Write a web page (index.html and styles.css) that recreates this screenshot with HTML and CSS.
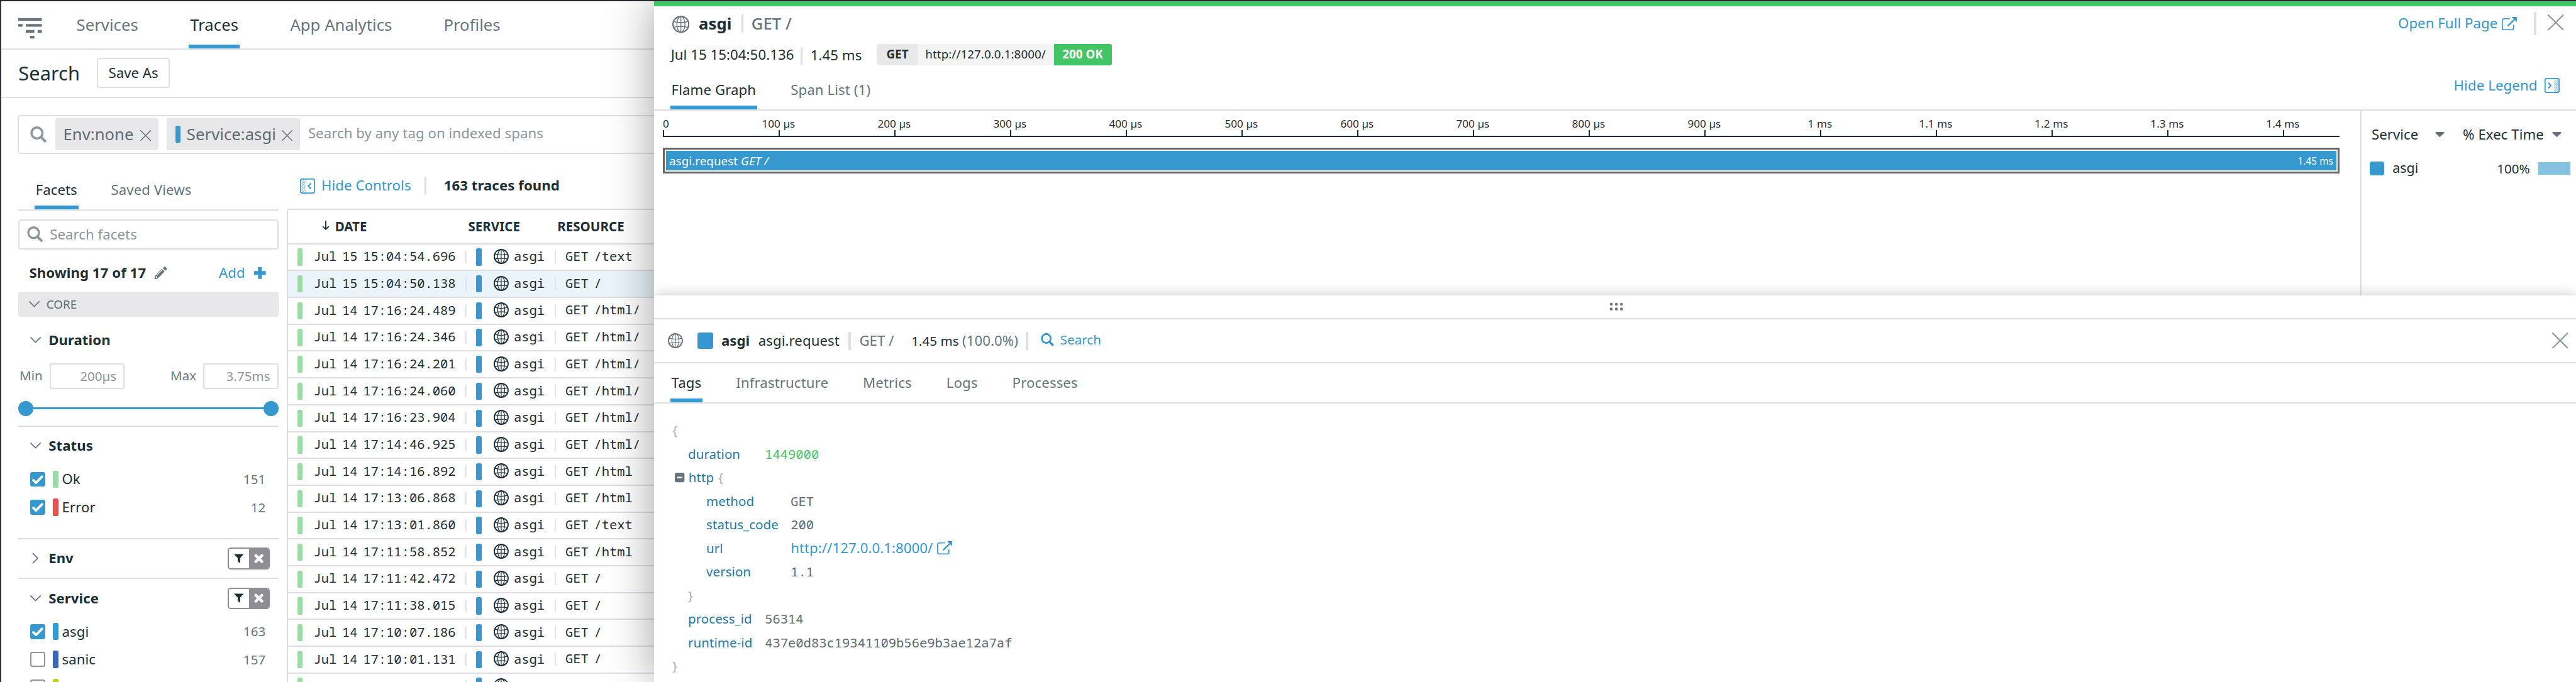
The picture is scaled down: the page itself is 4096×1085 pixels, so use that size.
FILE: index.html
```html
<!DOCTYPE html>
<html lang="en">
<head>
<meta charset="utf-8">
<title>Traces</title>
<link rel="stylesheet" href="styles.css">
</head>
<body>
<svg class="defs" aria-hidden="true">
  <defs>
    <symbol id="globe" viewBox="0 0 28 28"><g fill="none" stroke="currentColor" stroke-width="1.4"><circle cx="14" cy="14" r="12.9" stroke-width="2.2"/><ellipse cx="14" cy="14" rx="6.6" ry="12.8"/><path d="M14 1v26M2.200 9.600c7 1.800 16.600 1.800 23.600 0M2.200 18.900c7-1.800 16.600-1.800 23.600 0"/></g></symbol>
    <symbol id="search" viewBox="0 0 28 28"><g fill="none" stroke="currentColor"><circle cx="11.8" cy="11.6" r="9.6" stroke-width="3.8"/><path d="M19 19l7 7" stroke-width="4.6" stroke-linecap="round"/></g></symbol>
    <symbol id="close" viewBox="0 0 30 30"><path d="M1.2 1.2l27.6 27.6M28.8 1.2L1.2 28.8" fill="none" stroke="currentColor" stroke-width="2.4" stroke-linecap="round"/></symbol>
    <symbol id="down" viewBox="0 0 20 12"><path d="M1 1l9 9 9-9" fill="none" stroke="currentColor" stroke-width="2" stroke-linecap="round"/></symbol>
    <symbol id="check" viewBox="0 0 28 28"><path d="M5.8 15.2l5 4.8L22 8.6" fill="none" stroke="#fff" stroke-width="4.4" stroke-linecap="round" stroke-linejoin="round"/></symbol>
    <symbol id="external" viewBox="0 0 28 25"><g fill="none" stroke="currentColor"><path d="M15 3.2H4.6Q1 3.2 1 6.8v13.4q0 3.6 3.6 3.6h13.8q3.6 0 3.6-3.6V15" stroke-width="2"/><path d="M12 16L25 3.5" stroke-width="2.8" stroke-linecap="round"/></g><path d="M18.5 0H28v9.5z" fill="currentColor"/></symbol>
    <symbol id="collapse" viewBox="0 0 28 28"><g fill="none" stroke="currentColor"><rect x="1" y="1" width="26" height="26" rx="3" stroke-width="2"/><path d="M3 7l4-4M3 11l7-7M3 15l7-7M3 19l7-7M3 23l7-7M4 26l6-6M8 26l2-2" stroke-width="1"/><path d="M20.4 8.8l-5 5.2 5 5.2" stroke-width="2.4"/></g></symbol>
    <symbol id="expand" viewBox="0 0 28 28"><g fill="none" stroke="currentColor"><rect x="1" y="1" width="26" height="26" rx="3" stroke-width="2"/><path d="M18 7l4-4M18 11l7-7M18 15l7-7M18 19l7-7M18 23l7-7M19 26l6-6M23 26l2-2" stroke-width="1"/><path d="M7 9l5 5-5 5" stroke-width="2.4"/></g></symbol>
    <symbol id="filter" viewBox="0 0 18 18"><path d="M0 .5h18l-6.500 7.500V17.500L7 14V8z" fill="currentColor"/></symbol>
    <symbol id="cross" viewBox="0 0 16 16"><path d="M3 3l10 10M13 3L3 13" fill="none" stroke="#fff" stroke-width="4.600" stroke-linecap="round"/></symbol>
  </defs>
</svg>

<main class="app">
  <nav class="nav">
    <svg class="logo" viewBox="0 0 44 39"><path d="M0 1h44v5H0zM0 12h8v5H0zM14 12h30v5H14zM14 23h16v5H14zM36 23h8v5h-8zM22 34h8v5h-8z" fill="#68747b"/></svg>
    <a class="nav-tab">Services</a>
    <a class="nav-tab active">Traces</a>
    <a class="nav-tab">App Analytics</a>
    <a class="nav-tab">Profiles</a>
  </nav>
  <header class="titlebar"><h1>Search</h1><button class="save">Save As</button></header>

  <div class="searchbar">
    <svg class="ic-search"><use href="#search"/></svg>
    <span class="chip env">Env:none<svg class="ic-x"><use href="#close"/></svg></span>
    <span class="chip service"><i class="bar blue"></i>Service:asgi<svg class="ic-x"><use href="#close"/></svg></span>
    <span class="placeholder">Search by any tag on indexed spans</span>
  </div>

  <div class="columns">
    <aside class="sidebar">
      <div class="side-tabs"><a class="active">Facets</a><a>Saved Views</a></div>
      <div class="facet-search"><svg class="ic-search"><use href="#search"/></svg>Search facets</div>
      <div class="showing">
        <b>Showing 17 of 17</b>
        <svg class="pencil" viewBox="0 0 24 24"><path d="M1.500 17.500L14.500 4.500l5 5-13 13-5.800 1.300z" fill="#68747b"/><path d="M16 3l2.500-2.500q1.200-.8 2.300.2l2.500 2.500q1 1.200.1 2.300L21 8z" fill="#68747b"/><path d="M5.500 16l9-9" stroke="#fff" stroke-width="1.200"/><path d="M3.500 18.800l2 2" stroke="#fff" stroke-width="2.400"/></svg>
        <a class="add">Add<svg viewBox="0 0 24 24"><path d="M12 1v22M1 12h22" stroke="currentColor" stroke-width="7"/></svg></a>
      </div>
      <div class="core"><svg><use href="#down"/></svg>CORE</div>

      <section class="facet">
        <h3 class="tall"><svg class="chev"><use href="#down"/></svg>Duration</h3>
        <div class="range"><label>Min</label><span class="num">200µs</span><label class="max">Max</label><span class="num">3.75ms</span></div>
        <div class="slider"><i></i><i></i></div>
      </section>
      <section class="facet status">
        <h3><svg class="chev"><use href="#down"/></svg>Status</h3>
        <div class="opt"><span class="box on"><svg><use href="#check"/></svg></span><i class="bar green"></i>Ok<em>151</em></div>
        <div class="opt"><span class="box on"><svg><use href="#check"/></svg></span><i class="bar red"></i>Error<em>12</em></div>
      </section>
      <section class="facet">
        <h3><svg class="chev closed"><use href="#down"/></svg>Env<span class="toggle"><span><svg><use href="#filter"/></svg></span><span class="off"><svg><use href="#cross"/></svg></span></span></h3>
      </section>
      <section class="facet">
        <h3><svg class="chev"><use href="#down"/></svg>Service<span class="toggle"><span><svg><use href="#filter"/></svg></span><span class="off"><svg><use href="#cross"/></svg></span></span></h3>
        <div class="opt"><span class="box on"><svg><use href="#check"/></svg></span><i class="bar blue"></i>asgi<em>163</em></div>
        <div class="opt"><span class="box"></span><i class="bar navy"></i>sanic<em>157</em></div>
        <div class="opt"><span class="box"></span><i class="bar lime"></i></div>
      </section>
    </aside>

    <section class="results">
      <div class="toolbar"><svg class="ic-panel"><use href="#collapse"/></svg><a>Hide Controls</a><i class="sep"></i><b>163 traces found</b></div>
      <div class="table">
        <div class="thead"><svg viewBox="0 0 12 18"><path d="M6 1v15M1 11.300l5 5 5-5" fill="none" stroke="currentColor" stroke-width="2.200" stroke-linecap="round" stroke-linejoin="round"/></svg><span class="th-date">DATE</span><span class="th-service">SERVICE</span><span>RESOURCE</span></div>
        <div class="tr"><i class="bar green"></i><span class="date">Jul 15 15:04:54.696</span><i class="bar blue"></i><svg><use href="#globe"/></svg><span class="svc">asgi</span><span class="res">GET /text</span></div>
        <div class="tr selected"><i class="bar green"></i><span class="date">Jul 15 15:04:50.138</span><i class="bar blue"></i><svg><use href="#globe"/></svg><span class="svc">asgi</span><span class="res">GET /</span></div>
        <div class="tr"><i class="bar green"></i><span class="date">Jul 14 17:16:24.489</span><i class="bar blue"></i><svg><use href="#globe"/></svg><span class="svc">asgi</span><span class="res">GET /html/</span></div>
        <div class="tr"><i class="bar green"></i><span class="date">Jul 14 17:16:24.346</span><i class="bar blue"></i><svg><use href="#globe"/></svg><span class="svc">asgi</span><span class="res">GET /html/</span></div>
        <div class="tr"><i class="bar green"></i><span class="date">Jul 14 17:16:24.201</span><i class="bar blue"></i><svg><use href="#globe"/></svg><span class="svc">asgi</span><span class="res">GET /html/</span></div>
        <div class="tr"><i class="bar green"></i><span class="date">Jul 14 17:16:24.060</span><i class="bar blue"></i><svg><use href="#globe"/></svg><span class="svc">asgi</span><span class="res">GET /html/</span></div>
        <div class="tr"><i class="bar green"></i><span class="date">Jul 14 17:16:23.904</span><i class="bar blue"></i><svg><use href="#globe"/></svg><span class="svc">asgi</span><span class="res">GET /html/</span></div>
        <div class="tr"><i class="bar green"></i><span class="date">Jul 14 17:14:46.925</span><i class="bar blue"></i><svg><use href="#globe"/></svg><span class="svc">asgi</span><span class="res">GET /html/</span></div>
        <div class="tr"><i class="bar green"></i><span class="date">Jul 14 17:14:16.892</span><i class="bar blue"></i><svg><use href="#globe"/></svg><span class="svc">asgi</span><span class="res">GET /html</span></div>
        <div class="tr"><i class="bar green"></i><span class="date">Jul 14 17:13:06.868</span><i class="bar blue"></i><svg><use href="#globe"/></svg><span class="svc">asgi</span><span class="res">GET /html</span></div>
        <div class="tr"><i class="bar green"></i><span class="date">Jul 14 17:13:01.860</span><i class="bar blue"></i><svg><use href="#globe"/></svg><span class="svc">asgi</span><span class="res">GET /text</span></div>
        <div class="tr"><i class="bar green"></i><span class="date">Jul 14 17:11:58.852</span><i class="bar blue"></i><svg><use href="#globe"/></svg><span class="svc">asgi</span><span class="res">GET /html</span></div>
        <div class="tr"><i class="bar green"></i><span class="date">Jul 14 17:11:42.472</span><i class="bar blue"></i><svg><use href="#globe"/></svg><span class="svc">asgi</span><span class="res">GET /</span></div>
        <div class="tr"><i class="bar green"></i><span class="date">Jul 14 17:11:38.015</span><i class="bar blue"></i><svg><use href="#globe"/></svg><span class="svc">asgi</span><span class="res">GET /</span></div>
        <div class="tr"><i class="bar green"></i><span class="date">Jul 14 17:10:07.186</span><i class="bar blue"></i><svg><use href="#globe"/></svg><span class="svc">asgi</span><span class="res">GET /</span></div>
        <div class="tr"><i class="bar green"></i><span class="date">Jul 14 17:10:01.131</span><i class="bar blue"></i><svg><use href="#globe"/></svg><span class="svc">asgi</span><span class="res">GET /</span></div>
        <div class="tr"><i class="bar green"></i><span class="date"></span><i class="bar blue"></i><svg><use href="#globe"/></svg></div>
      </div>
    </section>
  </div>
</main>

<div class="drawer">
  <header class="trace-head">
    <div class="trace-title">
      <svg class="globe"><use href="#globe"/></svg><b>asgi</b><i class="sep"></i><span class="muted">GET /</span>
      <a class="open">Open Full Page<svg><use href="#external"/></svg></a><i class="sep"></i><svg class="ic-close"><use href="#close"/></svg>
    </div>
    <div class="trace-info">
      <span class="when">Jul 15 15:04:50.136</span><i class="sep"></i><span class="took">1.45 ms</span>
      <span class="pill"><b class="verb">GET</b><span class="url">http://127.0.0.1:8000/</span><b class="code">200 OK</b></span>
    </div>
    <div class="tabs graph-tabs"><a class="active">Flame Graph</a><a>Span List (1)</a><span class="legend-link">Hide Legend<svg class="ic-panel"><use href="#expand"/></svg></span></div>
  </header>

  <div class="graph">
    <div class="flame">
      <div class="axis">
        <div class="tick first"><span>0</span></div><div class="tick"><span>100 µs</span></div><div class="tick"><span>200 µs</span></div><div class="tick"><span>300 µs</span></div><div class="tick"><span>400 µs</span></div><div class="tick"><span>500 µs</span></div><div class="tick"><span>600 µs</span></div><div class="tick"><span>700 µs</span></div><div class="tick"><span>800 µs</span></div><div class="tick"><span>900 µs</span></div><div class="tick"><span>1 ms</span></div><div class="tick"><span>1.1 ms</span></div><div class="tick"><span>1.2 ms</span></div><div class="tick"><span>1.3 ms</span></div><div class="tick last"><span>1.4 ms</span></div>
      </div>
      <div class="span-frame"><div class="span"><span>asgi.request <i>GET /</i></span><small>1.45 ms</small></div></div>
    </div>
    <div class="legend">
      <div class="legend-head"><span class="lh-service">Service</span><i class="caret"></i><span class="lh-exec">% Exec Time</span><i class="caret"></i></div>
      <div class="legend-row"><i class="swatch"></i><span class="lr-name">asgi</span><span class="lr-pct">100%</span><i class="meter"></i></div>
    </div>
  </div>

  <section class="detail">
    <div class="handle"><svg viewBox="0 0 26 16"><g fill="#68747b"><circle cx="3.500" cy="3.500" r="2.700"/><circle cx="13" cy="3.500" r="2.700"/><circle cx="22.500" cy="3.500" r="2.700"/><circle cx="3.500" cy="12.500" r="2.700"/><circle cx="13" cy="12.500" r="2.700"/><circle cx="22.500" cy="12.500" r="2.700"/></g></svg></div>
    <div class="span-head">
      <svg class="globe"><use href="#globe"/></svg><i class="swatch"></i><b>asgi</b><span class="op">asgi.request</span><i class="sep"></i><span class="muted resource">GET /</span><span class="time">1.45 ms <span class="muted">(100.0%)</span></span><i class="sep"></i>
      <a class="find"><svg><use href="#search"/></svg>Search</a><svg class="ic-close"><use href="#close"/></svg>
    </div>
    <div class="tabs span-tabs"><a class="active">Tags</a><a>Infrastructure</a><a>Metrics</a><a>Logs</a><a>Processes</a></div>
    <div class="tree">
      <div class="line"><span class="brace">{</span></div>
      <div class="line l1"><span class="key">duration</span><span class="val num-val">1449000</span></div>
      <div class="line group"><svg viewBox="0 0 18 18"><rect width="18" height="18" rx="3.500" fill="#68747b"/><path d="M4 9h10" stroke="#fff" stroke-width="2.600"/></svg><span class="key">http</span><span class="brace">{</span></div>
      <div class="line l2"><span class="key">method</span><span class="val">GET</span></div>
      <div class="line l2"><span class="key">status_code</span><span class="val">200</span></div>
      <div class="line l2"><span class="key">url</span><a class="link">http://127.0.0.1:8000/<svg><use href="#external"/></svg></a></div>
      <div class="line l2"><span class="key">version</span><span class="val">1.1</span></div>
      <div class="line l1"><span class="brace">}</span></div>
      <div class="line l1"><span class="key">process_id</span><span class="val">56314</span></div>
      <div class="line l1"><span class="key">runtime-id</span><span class="val">437e0d83c19341109b56e9b3ae12a7af</span></div>
      <div class="line"><span class="brace">}</span></div>
    </div>
  </section>
</div>
</body>
</html>
```
FILE: styles.css
```css
/* 1rem = 10 design units */
html { font-size: 8.5405px; }
*, *::before, *::after { box-sizing: border-box; }
body {
  position: relative; margin: 0; width: 100vw; height: 100vh; overflow: hidden;
  background: #fff; border-top: 2px solid #29262b; color: #1e2e35;
  font-family: "Noto Sans", "Open Sans", sans-serif; font-size: 2.6rem; line-height: 1; letter-spacing: .003em;
  --line: #dedee3; --blue: #3598ce; --gray: #68747b; --soft: #8d969b;
}
svg { display: block; flex: none; overflow: visible; }
span, a, b, h1, em, label, button { white-space: nowrap; }
.defs { position: absolute; width: 0; height: 0; }
h1, h3 { margin: 0; }
em { font-style: normal; }
a { color: var(--blue); }
.muted { color: var(--gray); }
.bar { flex: none; width: 1rem; height: 3.2rem; border-radius: .3rem; }
.blue { background: var(--blue); }
.green { background: #98dda1; }
.red { background: #e2554f; }
.navy { background: #3b66b5; }
.lime { background: #bfd01d; }
.sep { flex: none; width: .4rem; height: 3.4rem; background: var(--line); }
.ic-panel { width: 2.8rem; height: 2.8rem; color: var(--blue); }
.ic-close { width: 3rem; height: 3rem; color: #8a9499; }
.globe { color: var(--gray); }

/* page behind the drawer */
.app { height: 100%; border-left: 2px solid #352e3f; display: flex; flex-direction: column; }
.nav { flex: none; height: 9rem; display: flex; align-items: stretch; gap: 9.200rem; padding-left: 3.2rem; border-bottom: 2px solid var(--line); font-size: 3rem; }
.logo { width: 4.4rem; height: 3.9rem; margin: 3rem -3rem 0 0; }
.nav-tab { display: flex; align-items: center; padding: 0 .2rem; color: var(--gray); border-bottom: .8rem solid transparent; border-top: .8rem solid transparent; }
.nav-tab.active { padding: 0 .250rem; }
.active { color: #1e2e35 !important; border-bottom-color: var(--blue) !important; }
.titlebar { flex: none; height: 9rem; display: flex; align-items: center; padding-left: 3.2rem; border-bottom: 2px solid var(--line); }
h1 { width: 14.6rem; font-size: 3.6rem; font-weight: 400; }
.save { width: 13.6rem; height: 5.6rem; padding: 0; border: 2px solid var(--line); border-radius: .5rem; background: #fff; color: inherit; font: inherit; line-height: 1; }
.searchbar { flex: none; margin: 3.2rem 0 0 3rem; height: 7.2rem; display: flex; align-items: center; border: 2px solid var(--line); border-radius: .6rem; }
.ic-search { color: var(--soft); width: 2.9rem; height: 2.9rem; }
.searchbar .ic-search { width: 3rem; height: 3rem; margin-left: 2.2rem; }
.chip { display: flex; align-items: center; height: 6rem; border-radius: .4rem; background: #e8e8ea; color: #5f6a71; font-size: 3rem; }
.env { width: 19.2rem; margin-left: 1.6rem; padding-left: 1.5rem; }
.service { width: 24.8rem; margin-left: 1.6rem; padding-left: 1.6rem; }
.service .bar { margin-right: 1.1rem; }
.ic-x { width: 2rem; height: 2rem; margin: .4rem 1.4rem 0 auto; }
.placeholder { margin: -.4rem 0 0 1.5rem; color: var(--soft); }
.columns { display: flex; }

/* facets */
.sidebar { flex: none; width: 48.4rem; margin-left: 3.2rem; padding-top: 2.8rem; }
.side-tabs { display: flex; gap: 5.9rem; height: 7.8rem; padding-left: 3rem; border-bottom: 2px solid var(--line); }
.side-tabs a { display: flex; align-items: center; padding: 0 .2rem; color: var(--gray); border-top: 1.1rem solid transparent; border-bottom: .8rem solid transparent; }
.facet-search { display: flex; align-items: center; gap: 1.3rem; height: 5.6rem; margin-top: 1.6rem; padding-left: 1.4rem; border: 2px solid var(--line); border-radius: .5rem; color: var(--soft); }
.showing { display: flex; align-items: center; height: 7.150rem; margin-top: .8rem; padding: 0 2.2rem 0 2rem; }
.pencil { width: 2.4rem; height: 2.4rem; margin-left: 1.5rem; }
.add { display: flex; align-items: center; gap: 1.6rem; margin-left: auto; }
.add svg { width: 2.4rem; height: 2.4rem; border-radius: .3rem; }
.core { display: flex; align-items: center; gap: 1.2rem; height: 4.6rem; padding-left: 2rem; border-radius: .4rem; background: #e8e8ea; color: #5f6a71; font-size: 2.2rem; }
.core svg { width: 2rem; height: 1.2rem; color: var(--gray); }
.facet { margin-bottom: -.030rem; border-bottom: 2px solid var(--line); }
.facet h3 { display: flex; align-items: center; height: 7.2rem; padding: 0 1.6rem 0 2.2rem; font-size: 2.6rem; }
.facet h3.tall { height: 8.7rem; }
.chev { width: 2rem; height: 1.2rem; margin-right: 1.4rem; color: var(--gray); }
.closed { transform: rotate(-90deg); }
.range { display: flex; align-items: center; font-size: 2.4rem; color: var(--gray); }
.range label { width: 5.8rem; padding-left: .2rem; margin-top: -.3rem; }
.range .max { margin-left: auto; width: 6.3rem; }
.num { display: flex; align-items: center; justify-content: flex-end; width: 14rem; height: 4.8rem; padding-right: 1.3rem; border: 2px solid var(--line); border-radius: .4rem; color: var(--soft); }
.slider { display: flex; justify-content: space-between; height: 2.8rem; margin: 2.2rem 0 1.8rem; background: linear-gradient(var(--blue), var(--blue)) center / 46rem .4rem no-repeat; }
.slider i { width: 2.8rem; height: 2.8rem; border-radius: 50%; background: var(--blue); }
.status { padding-bottom: 3.150rem; }
.opt { display: flex; align-items: center; height: 5.2rem; padding: 0 2.4rem 0 2.2rem; }
.opt .bar { margin: 0 .7rem 0 1.4rem; }
.opt em { margin-left: auto; color: var(--gray); font-size: 2.4rem; }
.box { flex: none; width: 2.8rem; height: 2.8rem; border: 2px solid #8d969b; border-radius: .4rem; }
.box.on { border: 0; background: var(--blue); }
.box svg { width: 100%; height: 100%; }
.toggle { display: flex; width: 7.8rem; height: 4rem; margin-left: auto; border: 2px solid #908e95; border-radius: .6rem; overflow: hidden; }
.toggle span { flex: 1; display: flex; align-items: center; justify-content: center; }
.toggle svg { width: 1.8rem; height: 1.8rem; }
.toggle .off { background: #908e95; }

/* trace list */
.results { flex: 1; min-width: 0; margin-left: 1.6rem; }
.toolbar { display: flex; align-items: center; height: 3.4rem; margin: 4.3rem 0 2.600rem 2.400rem; }
.toolbar a { width: 17.6rem; margin: -.2rem 1.6rem 0 1.2rem; }
.toolbar b { margin: -.2rem 0 0 3.200rem; }
.table { border: 2px solid var(--line); border-radius: .4rem 0 0 0; border-bottom: 0; }
.thead { display: flex; align-items: center; height: 6.350rem; padding-left: 6.300rem; border-bottom: 2px solid var(--line); font-weight: 700; font-size: 2.400rem; }
.thead svg { width: 1.4rem; height: 1.8rem; margin: -.4rem 1rem 0 0; }
.th-date { width: 24.8rem; }
.th-service { width: 16.600rem; }
.tr { display: flex; align-items: center; height: 5rem; padding-left: 1.700rem; border-bottom: 2px solid var(--line); font-family: "Noto Sans Mono", "Noto Mono", "DejaVu Sans Mono", monospace; font-size: 2.4rem; letter-spacing: 0; word-spacing: -.43rem; }
.tr.selected { background: #eaf4fa; }
.tr .date { width: 28.500rem; margin: 0 1.800rem 0 2rem; }
.tr .date, .tr .svc { background: linear-gradient(var(--line), var(--line)) right center / .2rem 2.400rem no-repeat; line-height: 2.600rem; height: 3rem; }
.tr svg { width: 2.800rem; height: 2.800rem; margin: -.3rem 1rem 0 2.200rem; }
.tr .svc { width: 7.800rem; margin-right: 1.800rem; }
.tr .res { margin-top: -.4rem; }

/* drawer */
.drawer { position: absolute; left: 121.8rem; right: 0; top: 0; bottom: 0; display: flex; flex-direction: column; background: #fff; border-top: 1rem solid #43c465; box-shadow: 0 0 8rem rgba(0, 0, 0, .38); }
.trace-head { height: 19.4rem; border-bottom: 2px solid var(--line); }
.trace-title { display: flex; align-items: center; height: 6.4rem; padding: 0 2.3rem 0 3.400rem; }
.trace-title .globe { width: 3.2rem; height: 3.2rem; margin: .3rem 1.7rem 0 0; }
.trace-title b, .trace-title .muted { font-size: 3rem; }
.trace-title .muted { font-weight: 500; margin-left: 1.500rem; }
.trace-title b { width: 7.9rem; }
.trace-title .sep:not(:nth-child(3)) { height: 4.4rem; }
.open { display: flex; align-items: center; gap: .8rem; margin: 0 3.2rem 0 auto; }
.open svg { width: 2.8rem; height: 2.500rem; }
.trace-title .ic-close { margin: -.4rem 0 0 2.1rem; }
.trace-info { display: flex; align-items: center; height: 5.2rem; padding-left: 3.1rem; }
.when { width: 24.1rem; }
.trace-info .sep { margin-top: .6rem; }
.took { width: 12.500rem; margin: .4rem 0 0 1.500rem; }
.pill { display: flex; height: 4rem; margin-left: 1.500rem; border-radius: .4rem; overflow: hidden; background: #f4f4f5; font-size: 2.2rem; line-height: 3.9rem; text-align: center; }
.took { width: 11rem; }
.verb { width: 7.4rem; background: #e8e8ea; }
.url { width: 25.4rem; }
.code { width: 10.8rem; background: #43c465; color: #fff; }
.tabs { display: flex; gap: 6.050rem; padding-left: 3rem; letter-spacing: .005em; }
.tabs a { display: flex; align-items: center; padding: 0 .2rem; color: var(--gray); border-bottom: .8rem solid transparent; }
.graph-tabs { height: 7.6rem; }
.graph-tabs a { padding-top: 1.1rem; }
.legend-link { display: flex; align-items: center; gap: 1.4rem; height: 6.4rem; margin: 0 3rem 0 auto; color: var(--blue); }

.graph { display: flex; height: 34.500rem; }
.flame { flex: 1; padding-left: 1.6rem; }
.axis { display: flex; width: 312.2rem; height: 5rem; border-bottom: 2px solid #1e2e35; font-size: 2rem; }
.tick { flex: none; width: 21.546rem; padding-top: 1.500rem; background: linear-gradient(#1e2e35, #1e2e35) left bottom / 2px 1.1rem no-repeat; }
.tick span { display: inline-block; transform: translateX(-50%); }
.tick.first span { transform: none; }
.tick.last { width: 10.500rem; }
.span-frame { width: 312.2rem; height: 4.8rem; margin-top: 2rem; padding: 2px; border: .4rem solid #666; }
.span { display: flex; align-items: center; justify-content: space-between; height: 100%; padding: .2rem .6rem 0; background: var(--blue); color: #fff; font-size: 2.2rem; }
.span small { font-size: 1.8rem; }
.legend { width: 40.2rem; border-left: 2px solid var(--line); }
.legend-head { display: flex; align-items: center; height: 9rem; padding-left: 1.9rem; }
.lh-service { width: 11.8rem; }
.lh-exec { margin-left: 3.400rem; width: 16.600rem; }
.caret { width: 1.8rem; height: 1rem; border-radius: .2rem; background: var(--gray); clip-path: polygon(0 0, 100% 0, 100% 15%, 50% 100%, 0 15%); }
.legend-row { display: flex; align-items: center; height: 3.6rem; padding: 0 1rem 0 1.6rem; }
.swatch { width: 2.6rem; height: 2.6rem; border-radius: .4rem; background: var(--blue); }
.lr-name { margin: -.3rem 0 0 1.6rem; font-size: 2.5rem; }
.lr-pct { margin-left: auto; font-size: 2.4rem; }
.meter { width: 6rem; height: 2.4rem; margin-left: 1.6rem; background: #85c1e0; }

/* span detail */
.detail { flex: 1; background: #fff; box-shadow: 0 0 2.4rem rgba(0, 0, 0, .22); clip-path: inset(-3rem 0 0 0); }
.handle { display: flex; align-items: center; justify-content: center; height: 4.450rem; padding-left: .4rem; border-bottom: 2px solid var(--line); }
.handle svg { width: 2.6rem; height: 1.6rem; }
.span-head { display: flex; align-items: center; height: 8.150rem; padding: 0 1.500rem 0 2.6rem; border-bottom: 2px solid var(--line); }
.span-head .globe { width: 2.8rem; height: 2.8rem; margin-right: 2.6rem; }
.span-head .swatch { width: 3rem; height: 3rem; }
.span-head b { width: 6.900rem; margin-left: 1.500rem; }
.op { width: 16.800rem; }
.resource { width: 9.700rem; margin-left: 1.600rem; }
.time { width: 21.300rem; font-size: 2.400rem; }
.time .muted { font-size: 2.600rem; }
.find { display: flex; align-items: center; gap: 1.200rem; margin: -.4rem auto 0 2.400rem; font-size: 2.400rem; }
.find svg { width: 2.400rem; height: 2.400rem; }
.span-tabs { height: 7.500rem; border-bottom: 2px solid var(--line); }
.span-tabs a { padding-top: .7rem; }
.tree { padding: 2.800rem 0 0 3.400rem; font-size: 2.400rem; }
.line { display: flex; align-items: center; height: 4.390rem; }
.brace { color: #a9b0b4; }
.key { color: #2478a5; }
.val { color: #5f6a71; font-family: "Noto Sans Mono", "Noto Mono", "DejaVu Sans Mono", monospace; letter-spacing: 0; }
.num-val { color: #43c465; }
.l1 { padding-left: 2.900rem; }
.l1 .key { width: 14.300rem; }
.l2 { padding-left: 6.300rem; }
.l2 .key { width: 15.700rem; }
.group { padding-left: .4rem; gap: .8rem; }
.group svg { width: 1.800rem; height: 1.800rem; }
.link { display: flex; align-items: center; gap: .8rem; font-size: 2.600rem; }
.link svg { width: 2.800rem; height: 2.500rem; }
```
